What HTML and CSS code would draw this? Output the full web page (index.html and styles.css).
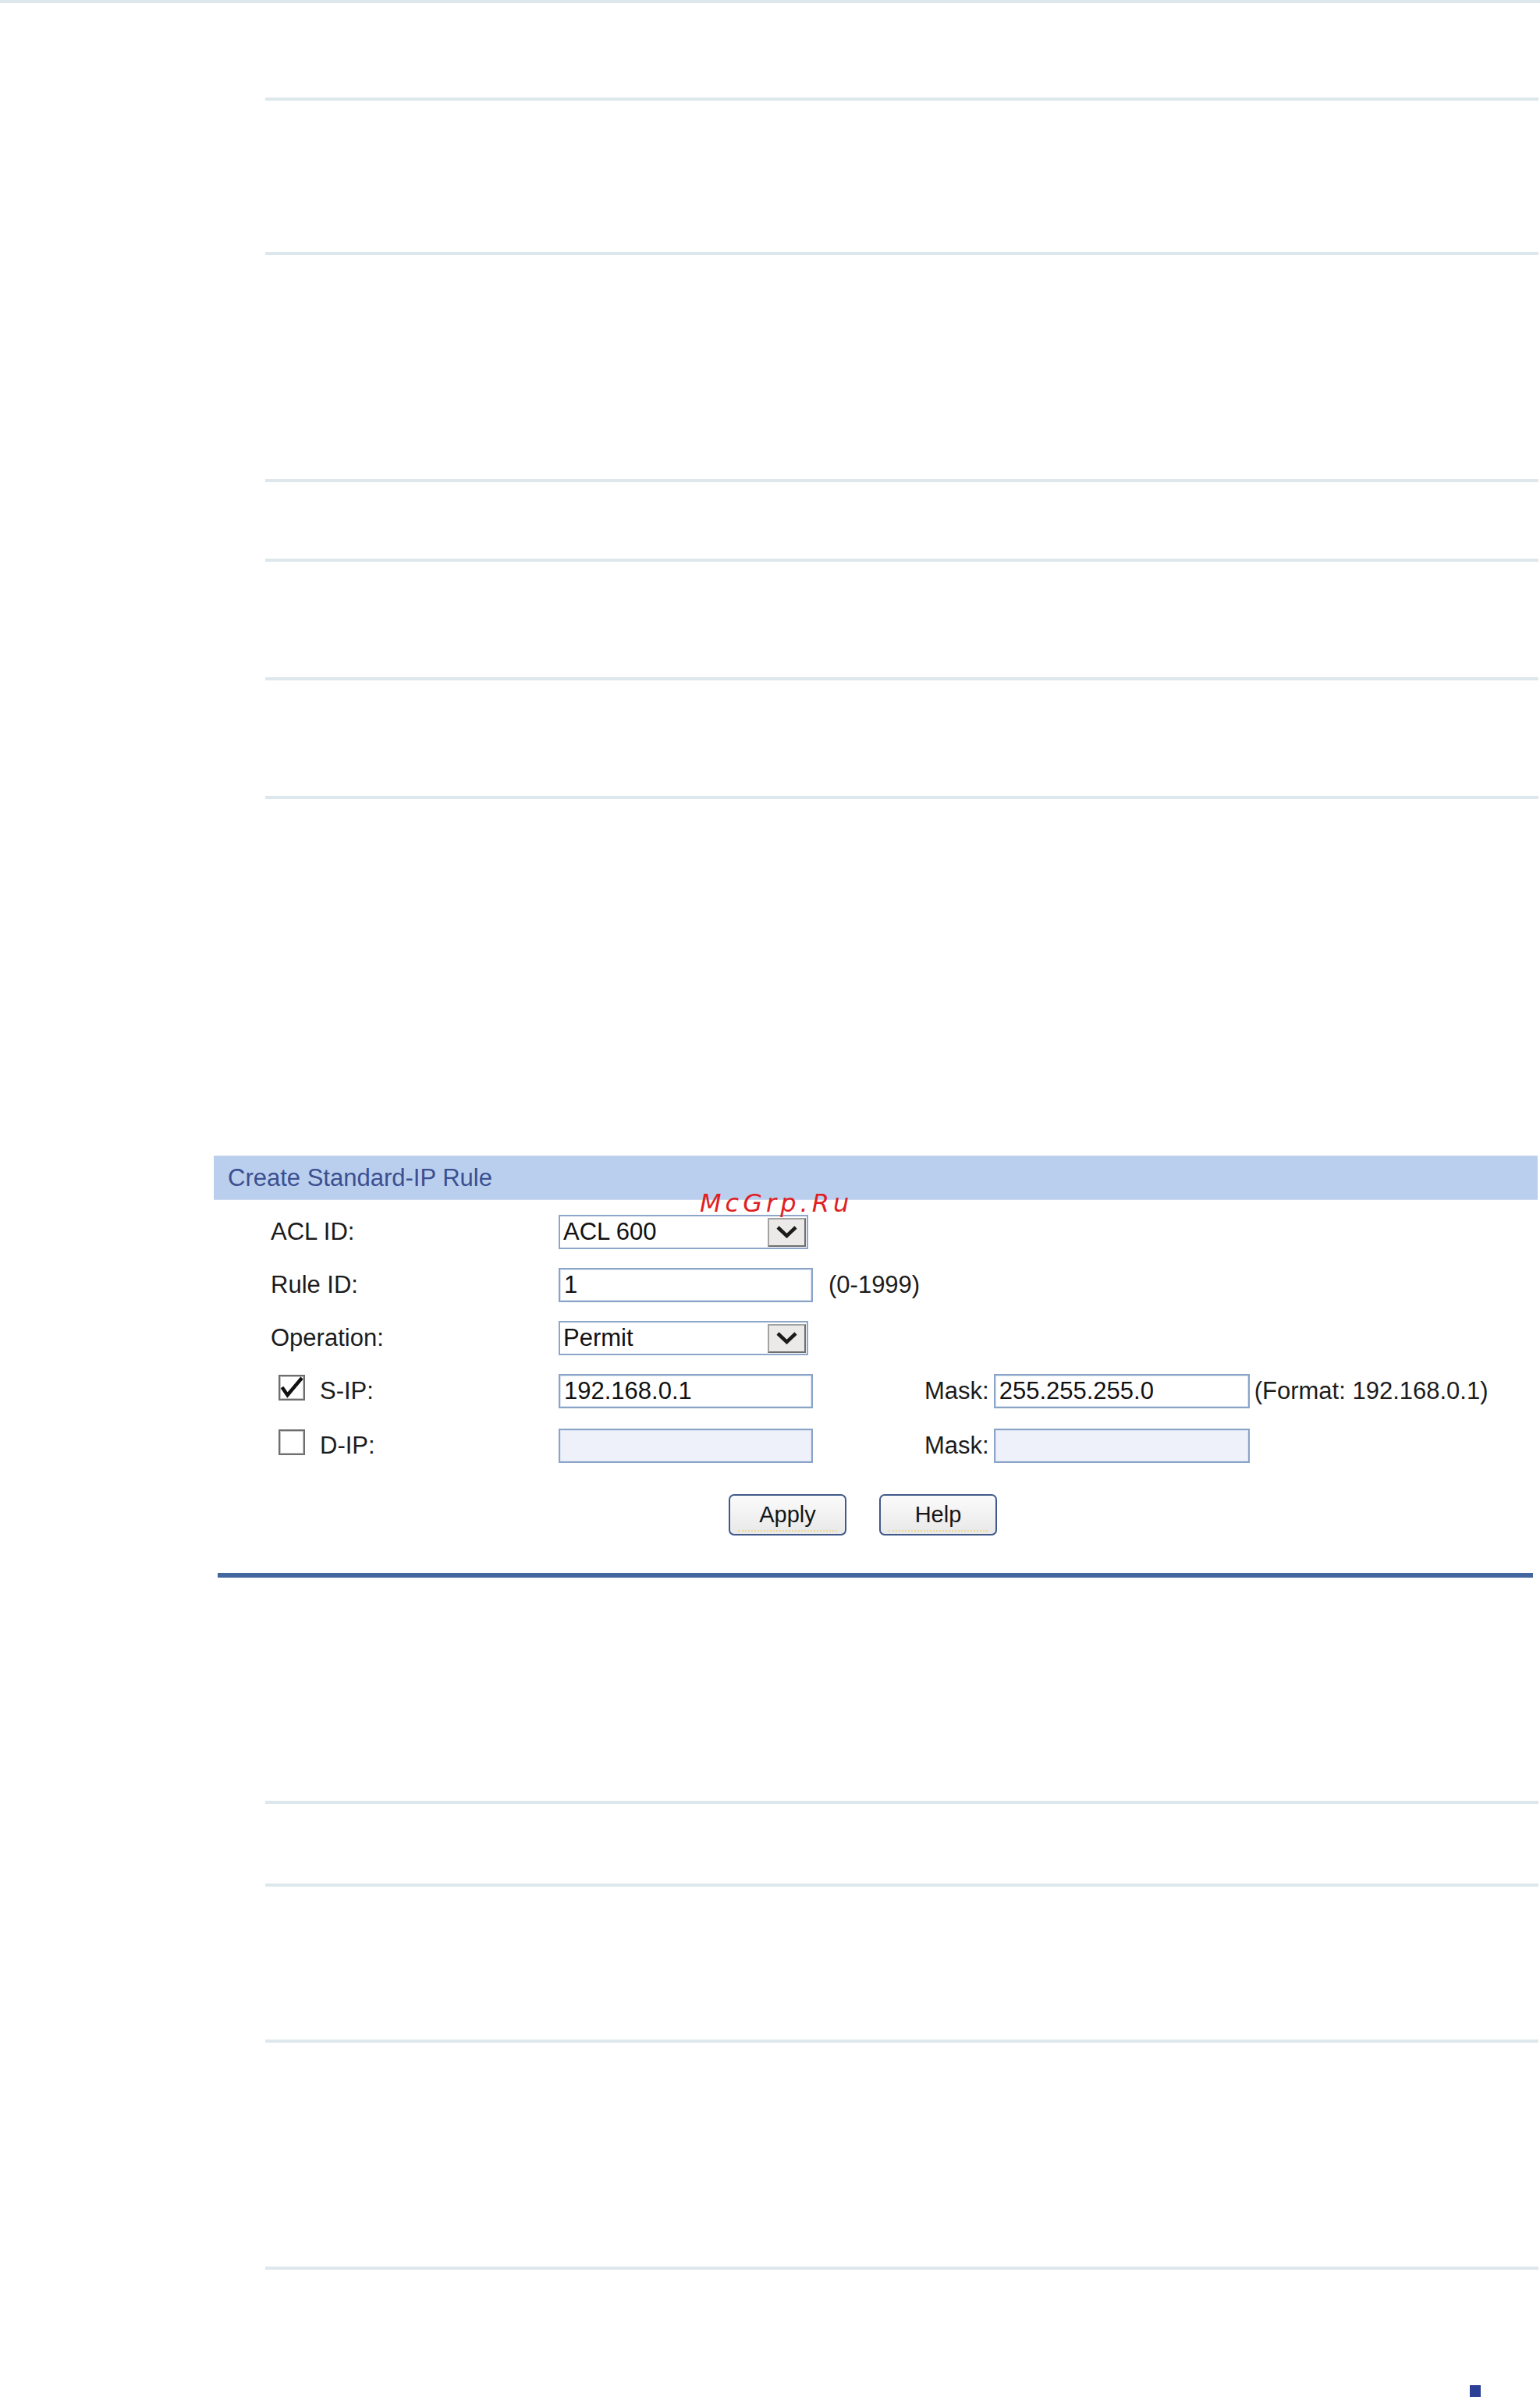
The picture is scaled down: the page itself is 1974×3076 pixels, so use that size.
FILE: index.html
```html
<!DOCTYPE html>
<html lang="en">
<head>
<meta charset="utf-8">
<title>Create Standard-IP Rule</title>
<link rel="stylesheet" href="styles.css">
</head>
<body>
<div class="page">
  <div class="top-rule"></div>

  <div class="spec-table upper">
    <div class="spec-row h198"></div>
    <div class="spec-row h291"></div>
    <div class="spec-row h102"></div>
    <div class="spec-row h152"></div>
    <div class="spec-row h152"></div>
  </div>

  <section class="panel">
    <div class="panel-head">Create Standard-IP Rule</div>
    <div class="panel-body">
      <div class="form-row">
        <div class="label">ACL ID:</div>
        <div class="select">
          <span class="select-text">ACL 600</span>
          <span class="select-btn">
            <svg width="27" height="16" viewBox="0 0 27 16"><polyline points="2,2 13.5,13 25,2" fill="none" stroke="#1b1b1b" stroke-width="4.5"/></svg>
          </span>
        </div>
      </div>
      <div class="form-row">
        <div class="label">Rule ID:</div>
        <input class="field" type="text" value="1">
        <span class="hint">(0-1999)</span>
      </div>
      <div class="form-row">
        <div class="label">Operation:</div>
        <div class="select">
          <span class="select-text">Permit</span>
          <span class="select-btn">
            <svg width="27" height="16" viewBox="0 0 27 16"><polyline points="2,2 13.5,13 25,2" fill="none" stroke="#1b1b1b" stroke-width="4.5"/></svg>
          </span>
        </div>
      </div>
      <div class="form-row">
        <div class="label">
          <span class="check">
            <svg width="28" height="27" viewBox="0 0 28 27"><polyline points="1.5,13 8.5,23 27,1" fill="none" stroke="#111" stroke-width="4.5"/></svg>
          </span>
          <span>S-IP:</span>
        </div>
        <input class="field" type="text" value="192.168.0.1">
        <span class="mask-label">Mask:</span>
        <input class="field wide" type="text" value="255.255.255.0">
        <span class="format">(Format: 192.168.0.1)</span>
      </div>
      <div class="form-row gap26">
        <div class="label">
          <span class="check"></span>
          <span>D-IP:</span>
        </div>
        <input class="field off" type="text" value="" disabled>
        <span class="mask-label">Mask:</span>
        <input class="field wide off" type="text" value="" disabled>
      </div>
      <div class="actions">
        <button class="btn" type="button">Apply</button>
        <button class="btn" type="button">Help</button>
      </div>
    </div>
    <div class="watermark">McGrp.Ru</div>
  </section>

  <div class="panel-rule"></div>

  <div class="spec-table lower">
    <div class="spec-row h106"></div>
    <div class="spec-row h200"></div>
    <div class="spec-row h291"></div>
  </div>

  <div class="page-mark"></div>
</div>
</body>
</html>
```
FILE: styles.css
```css
body {
  margin: 0;
  background: #ffffff;
  font-family: "Liberation Sans", Arial, sans-serif;
  color: #1c1c1c;
}

.page {
  width: 1974px;
}

.top-rule {
  height: 4px;
  background: #dde7ec;
}

.spec-table {
  margin-left: 340px;
  width: 1632px;
  border-bottom: 4px solid #dde7ec;
}

.spec-table.upper {
  margin-top: 121px;
}

.spec-table.lower {
  margin-top: 286px;
}

.spec-row {
  box-sizing: border-box;
  border-top: 4px solid #dde7ec;
}

.h102 { height: 102px; }
.h106 { height: 106px; }
.h152 { height: 152px; }
.h198 { height: 198px; }
.h200 { height: 200px; }
.h291 { height: 291px; }

.panel {
  position: relative;
  margin-top: 457px;
  margin-left: 274px;
  width: 1697px;
}

.panel-head {
  box-sizing: border-box;
  height: 57px;
  display: flex;
  align-items: center;
  padding-left: 18px;
  background: #bacfed;
  border-top: 1px solid #cbdaf1;
  border-bottom: 1px solid #cbdaf1;
  font-size: 31px;
  color: #3b4f91;
}

.panel-body {
  padding: 19px 0 0 73px;
}

.form-row {
  display: flex;
  align-items: center;
  height: 44px;
  margin-top: 24px;
  font-size: 31px;
}

.form-row:first-child {
  margin-top: 0;
}

.form-row.gap26 {
  margin-top: 26px;
}

.label {
  width: 369px;
  flex-shrink: 0;
  display: flex;
  align-items: center;
}

.check {
  box-sizing: border-box;
  width: 34px;
  height: 33px;
  margin: 0 19px 10px 10px;
  border: 2px solid #6e6e6e;
  box-shadow: inset 0 0 0 1px #c4c4c4;
  background: #ffffff;
  display: flex;
  align-items: center;
  justify-content: center;
  overflow: visible;
}

.check svg {
  overflow: visible;
}

.select {
  box-sizing: border-box;
  width: 320px;
  height: 44px;
  display: flex;
  align-items: center;
  border: 2px solid #8ea6c9;
  background: #ffffff;
}

.select-text {
  flex: 1;
  padding-left: 4px;
  color: #111111;
}

.select-btn {
  box-sizing: border-box;
  width: 49px;
  height: 37px;
  margin-right: 1px;
  display: flex;
  align-items: center;
  justify-content: center;
  background: #ebeae8;
  border: 2px solid #a3a3a3;
  border-right-color: #6f6f6f;
  border-bottom-color: #6f6f6f;
}

.field {
  box-sizing: border-box;
  width: 326px;
  height: 44px;
  margin: 0;
  padding: 0 5px;
  border: 2px solid #8aa4c8;
  box-shadow: inset 0 0 0 1px #dbe4f2;
  background: #ffffff;
  font: inherit;
  color: #111111;
  outline: none;
}

.field.wide {
  width: 328px;
}

.field.off {
  background: #eef0fa;
}

.hint {
  margin-left: 20px;
}

.mask-label {
  margin-left: 143px;
  margin-right: 6px;
}

.format {
  margin-left: 6px;
}

.actions {
  display: flex;
  margin-top: 40px;
  padding-left: 587px;
}

.btn {
  position: relative;
  box-sizing: border-box;
  width: 151px;
  height: 53px;
  margin: 0;
  padding: 0;
  border: 2px solid #41598a;
  border-radius: 7px;
  background: linear-gradient(#fbfbfb, #e8e8e8);
  font-family: "Liberation Sans", Arial, sans-serif;
  font-size: 29px;
  color: #151515;
}

.btn::after {
  content: "";
  position: absolute;
  left: 10px;
  right: 10px;
  bottom: 3px;
  border-bottom: 2px dotted #ecd78c;
}

.btn + .btn {
  margin-left: 42px;
}

.watermark {
  position: absolute;
  left: 623px;
  top: 45px;
  font-family: "DejaVu Sans", sans-serif;
  font-style: italic;
  font-size: 32px;
  line-height: 32px;
  letter-spacing: 5px;
  color: #e01f25;
  pointer-events: none;
}

.panel-rule {
  margin-top: 48px;
  margin-left: 279px;
  width: 1686px;
  height: 6px;
  background: #41679e;
}

.page-mark {
  margin-top: 148px;
  margin-left: 1884px;
  width: 14px;
  height: 15px;
  background: #2b3f94;
}
```
